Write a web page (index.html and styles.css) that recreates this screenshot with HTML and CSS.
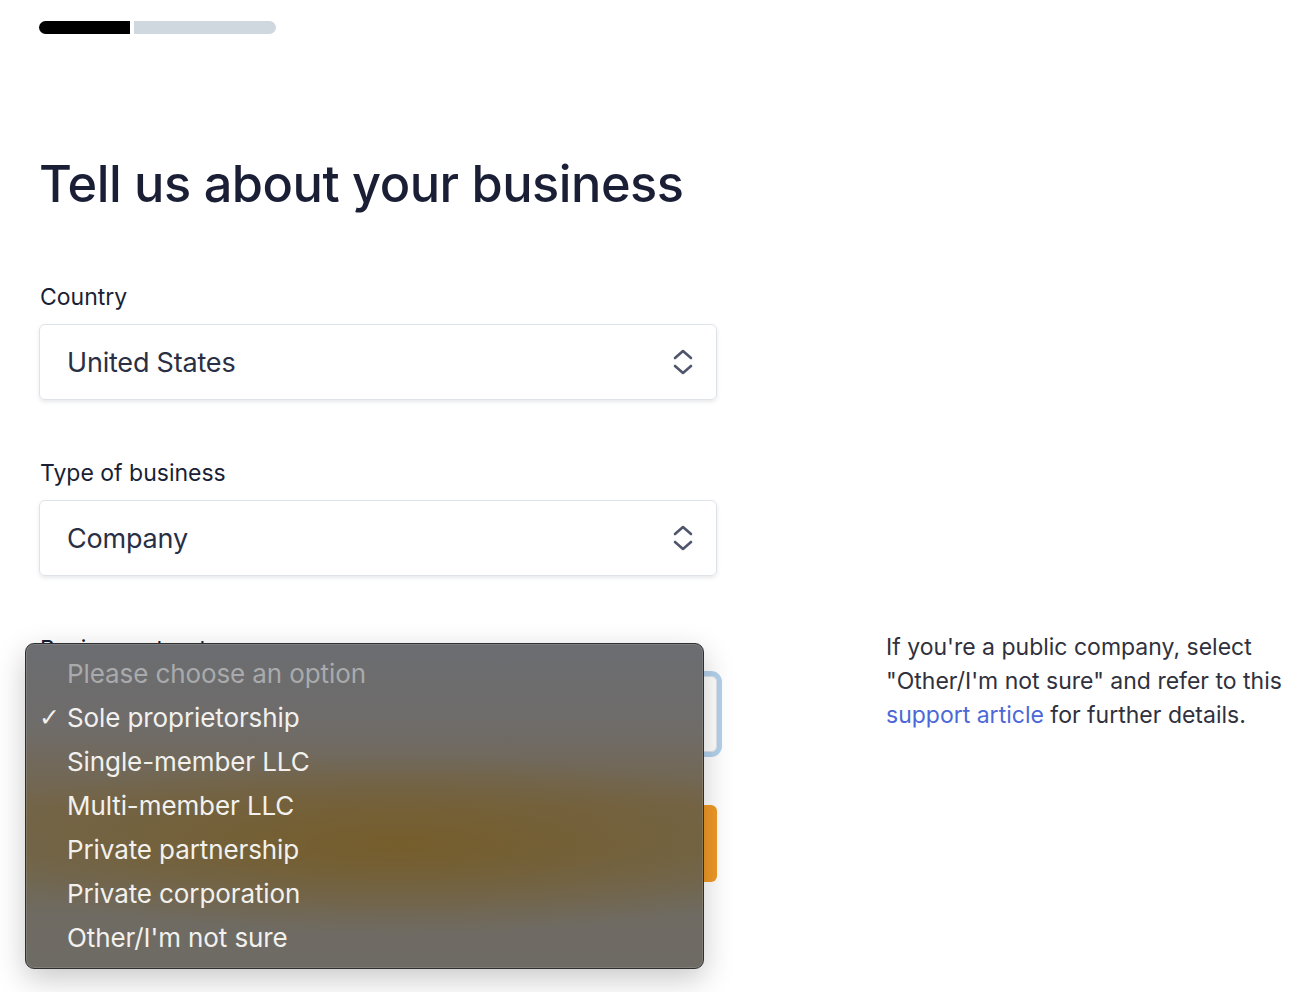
FILE: index.html
```html
<!DOCTYPE html>
<html lang="en">
<head>
  <meta charset="UTF-8" />
  <meta name="viewport" content="width=device-width, initial-scale=1.0" />
  <title>Tell us about your business</title>
  <link rel="stylesheet" href="styles.css">
</head>
<body>
  <div class="page">
    <div class="progress">
      <span class="progress-done"></span>
      <span class="progress-left"></span>
    </div>

    <h1>Tell us about your business</h1>

    <form class="form">
      <div class="field">
        <label>Country</label>
        <div class="select">
          <span>United States</span>
          <svg class="chevrons" width="22" height="28" viewBox="0 0 22 28">
            <path d="M3 10 L11 3 L19 10" />
            <path d="M3 18 L11 25 L19 18" />
          </svg>
        </div>
      </div>

      <div class="field">
        <label>Type of business</label>
        <div class="select">
          <span>Company</span>
          <svg class="chevrons" width="22" height="28" viewBox="0 0 22 28">
            <path d="M3 10 L11 3 L19 10" />
            <path d="M3 18 L11 25 L19 18" />
          </svg>
        </div>
      </div>

      <div class="field-row">
        <div class="field">
          <label>Business structure</label>
          <div class="select focused">
            <span>Sole proprietorship</span>
          </div>

          <!-- menu nativo aberto -->
          <ul class="menu">
            <li class="placeholder">Please choose an option</li>
            <li class="checked">Sole proprietorship</li>
            <li>Single-member LLC</li>
            <li>Multi-member LLC</li>
            <li>Private partnership</li>
            <li>Private corporation</li>
            <li>Other/I'm not sure</li>
          </ul>
        </div>
        <p class="help">
          If you're a public company, select "Other/I'm not sure" and refer to this
          <a href="#">support article</a> for further details.
        </p>
      </div>

      <button type="button" class="next">Continue</button>
    </form>
  </div>
</body>
</html>
```

FILE: styles.css
```css
* {
  box-sizing: border-box;
  margin: 0;
  padding: 0;
  font-family: Inter, 'Noto Sans', sans-serif;
}

body {
  background-color: #fff;
  color: #1a1f36;
}

.page {
  min-height: 100vh;
  padding: 21px 39px 0;
}

.progress {
  display: flex;
  gap: 4px;
  width: 237px;
  height: 13px;
}

.progress-done {
  width: 91px;
  background: #000;
  border-radius: 7px 0 0 7px;
}

.progress-left {
  flex: 1;
  background: #cfd7df;
  border-radius: 0 7px 7px 0;
}

h1 {
  margin-top: 118px;
  font-size: 50.5px;
  font-weight: 500;
  line-height: 64px;
  letter-spacing: -0.5px;
  color: #1a1f36;
}

.form {
  margin-top: 67px;
  display: flex;
  flex-direction: column;
  gap: 59px;
}

.field {
  position: relative;
  flex-shrink: 0;
  width: 678px;
  display: flex;
  flex-direction: column;
  gap: 13px;
}

.field label {
  font-size: 23px;
  line-height: 28px;
  color: #1a1f36;
  padding-left: 1px;
}

.select {
  height: 76px;
  display: flex;
  align-items: center;
  justify-content: space-between;
  padding: 0 22px 0 27px;
  border: 1px solid #dfe3e8;
  border-radius: 6px;
  box-shadow: 0 2px 4px rgba(60, 66, 87, 0.12);
  font-size: 27px;
  letter-spacing: -0.2px;
  color: #2a2f45;
}

.select.focused {
  box-shadow: 0 0 0 5px #b3d1ec;
}

.chevrons path {
  fill: none;
  stroke: #4f566b;
  stroke-width: 2.6;
  stroke-linecap: round;
  stroke-linejoin: round;
}

.field-row {
  display: flex;
  gap: 169px;
  align-items: flex-start;
}

.help {
  flex-shrink: 0;
  width: 420px;
  font-size: 23px;
  line-height: 34px;
  color: #30313d;
  margin-top: -5px;
}

.help a {
  color: #4c68d8;
  text-decoration: none;
}

.menu {
  position: absolute;
  left: -14px;
  top: 8px;
  width: 679px;
  height: 326px;
  list-style: none;
  padding: 8px 0;
  border-radius: 9px;
  border: 1px solid #2f2f2f;
  background:
    radial-gradient(ellipse 65% 28% at 55% 62%, rgba(118, 92, 40, 0.9), rgba(118, 92, 40, 0) 100%),
    linear-gradient(#6b6d71 0%, #6f6c6a 25%, #73654a 50%, #71664c 65%, #6f6b63 85%, #6e6b65 100%);
  box-shadow: inset 0 0 0 1px rgba(255, 255, 255, 0.12), 0 10px 30px rgba(0, 0, 0, 0.22);
  z-index: 2;
}

.menu li {
  height: 44px;
  line-height: 44px;
  padding-left: 41px;
  font-size: 26px;
  letter-spacing: -0.1px;
  color: #f2f1ee;
  position: relative;
}

.menu li.placeholder {
  color: #a9aaac;
}

.menu li.checked::before {
  content: "\2713";
  position: absolute;
  left: 13px;
  font-size: 25px;
  font-family: 'DejaVu Sans', sans-serif;
}

.next {
  width: 678px;
  height: 77px;
  margin-top: -6px;
  border: none;
  border-radius: 6px;
  background: #f09a27;
  color: #fff;
  font-size: 24px;
}
```
